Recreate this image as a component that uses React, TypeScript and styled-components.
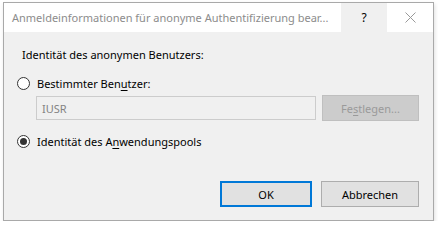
import React from "react";
import styled, { createGlobalStyle } from "styled-components";

const Global = createGlobalStyle`
  html, body { margin: 0; padding: 0; background: #ffffff; }
  body { font-family: "Noto Sans", "Liberation Sans", sans-serif; font-size: 11px; color: #000; }
  #root { padding: 2px 0 0 3px; }
`;

const Window = styled.div`
  width: 431px;
  height: 219px;
  box-sizing: border-box;
  border: 1px solid #a9a9a9;
  background: #f0f0f0;
  display: flex;
  flex-direction: column;
  box-shadow: 1px 2px 4px rgba(0, 0, 0, 0.12);
`;

const TitleBar = styled.div`
  height: 29px;
  background: #ffffff;
  display: flex;
  align-items: center;
`;

const Title = styled.div`
  flex: 1;
  padding-left: 8px;
  color: #8c8c8c;
  font-size: 11px;
  white-space: nowrap;
  overflow: hidden;
`;

const TitleButton = styled.div<{ $hover?: boolean }>`
  width: 46px;
  height: 29px;
  display: flex;
  align-items: center;
  justify-content: center;
  background: ${(p) => (p.$hover ? "#f0f0f0" : "transparent")};
  color: #000;
  font-size: 12px;
`;

const Content = styled.div`
  flex: 1;
  display: flex;
  flex-direction: column;
  padding: 15px 14px 0 0;
`;

const Heading = styled.div`
  margin-left: 18px;
  line-height: 16px;
`;

const RadioRow = styled.label<{ $top: number }>`
  display: flex;
  align-items: center;
  margin-left: 13px;
  margin-top: ${(p) => p.$top}px;
  height: 16px;
  gap: 7px;
`;

const RadioCircle = styled.span<{ $checked?: boolean }>`
  width: 13px;
  height: 13px;
  box-sizing: border-box;
  border: 1px solid #333;
  border-radius: 50%;
  background: #fff;
  display: flex;
  align-items: center;
  justify-content: center;
  &::after {
    content: "";
    display: ${(p) => (p.$checked ? "block" : "none")};
    width: 7px;
    height: 7px;
    border-radius: 50%;
    background: #333;
  }
`;

const U = styled.span`
  text-decoration: underline;
  text-underline-offset: 2px;
`;

const InputRow = styled.div`
  display: flex;
  align-items: center;
  margin: 4px 0 0 32px;
  gap: 6px;
`;

const TextInput = styled.div`
  width: 280px;
  height: 24px;
  box-sizing: border-box;
  border: 1px solid #cccccc;
  background: #f0f0f0;
  color: #838383;
  padding-left: 5px;
  display: flex;
  align-items: center;
`;

const Button = styled.div<{ $w: number; $disabled?: boolean; $default?: boolean }>`
  width: ${(p) => p.$w}px;
  height: 26px;
  box-sizing: border-box;
  display: flex;
  align-items: center;
  justify-content: center;
  background: ${(p) => (p.$disabled ? "#cccccc" : "#e1e1e1")};
  border: ${(p) =>
    p.$default ? "2px solid #0078d7" : p.$disabled ? "1px solid #bfbfbf" : "1px solid #adadad"};
  color: ${(p) => (p.$disabled ? "#9a9a9a" : "#000")};
`;

const Footer = styled.div`
  margin-top: auto;
  margin-bottom: 13px;
  display: flex;
  justify-content: flex-end;
  gap: 9px;
`;

const CloseIcon = () => (
  <svg width="11" height="11" viewBox="0 0 11 11">
    <path d="M0.5 0.5 L10.5 10.5 M10.5 0.5 L0.5 10.5" stroke="#999" strokeWidth="1" fill="none" />
  </svg>
);

export default function App() {
  return (
    <>
      <Global />
      <Window>
        <TitleBar>
          <Title>Anmeldeinformationen für anonyme Authentifizierung bear...</Title>
          <TitleButton $hover>?</TitleButton>
          <TitleButton>
            <CloseIcon />
          </TitleButton>
        </TitleBar>
        <Content>
          <Heading>Identität des anonymen Benutzers:</Heading>
          <RadioRow $top={12}>
            <RadioCircle />
            <span>
              Bestimmter Ben<U>u</U>tzer:
            </span>
          </RadioRow>
          <InputRow>
            <TextInput>IUSR</TextInput>
            <Button $w={97} $disabled>
              Fe<U>s</U>tlegen...
            </Button>
          </InputRow>
          <RadioRow $top={12}>
            <RadioCircle $checked />
            <span>
              Identität des A<U>n</U>wendungspools
            </span>
          </RadioRow>
          <Footer>
            <Button $w={92} $default>
              OK
            </Button>
            <Button $w={98}>Abbrechen</Button>
          </Footer>
        </Content>
      </Window>
    </>
  );
}
